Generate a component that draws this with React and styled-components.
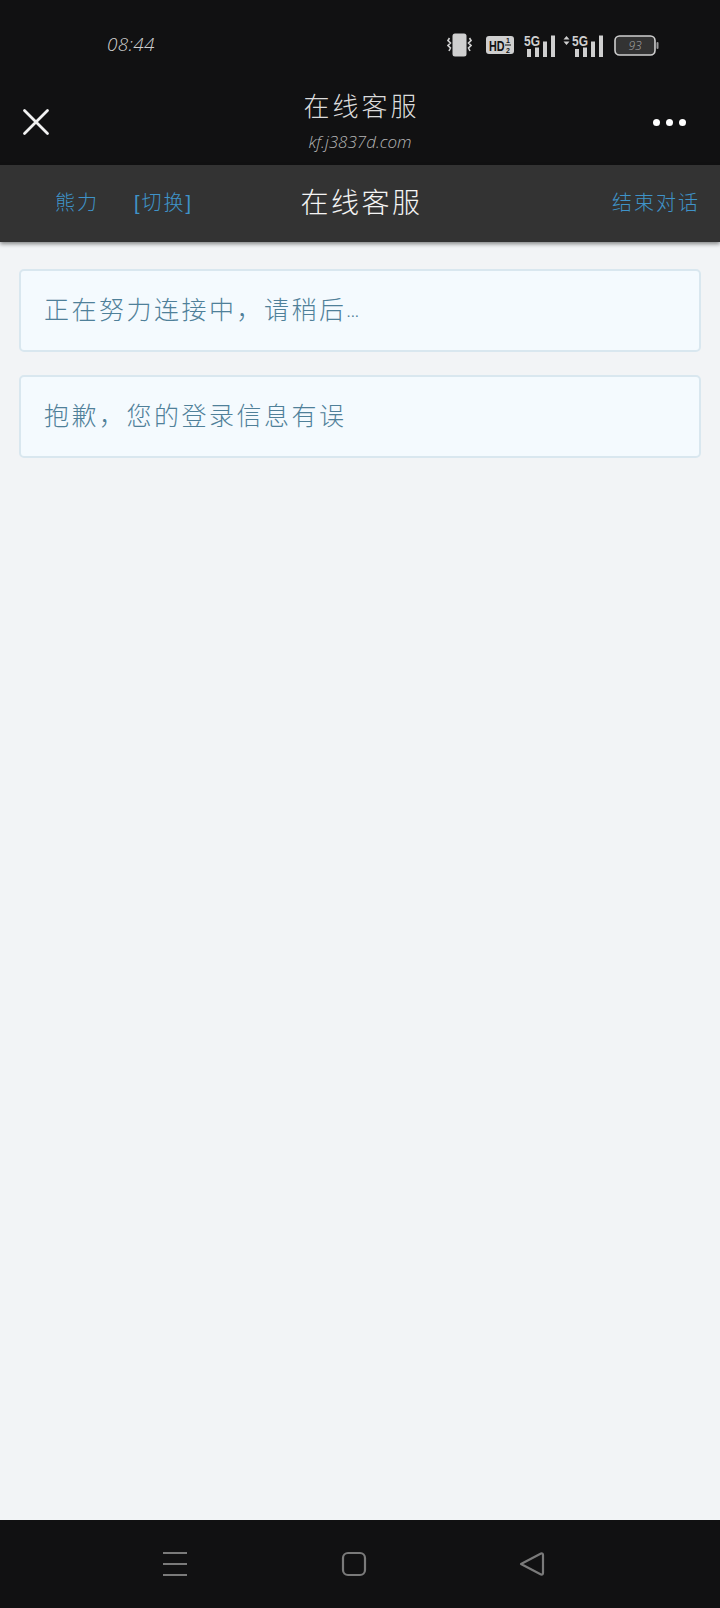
import React from 'react'
import styled, { createGlobalStyle } from 'styled-components'

const GlobalStyle = createGlobalStyle`
  html, body {
    margin: 0;
    padding: 0;
    background: #f2f4f6;
  }
  * {
    box-sizing: border-box;
  }
`

const hand = `"Liberation Sans", "Noto Sans CJK SC", sans-serif`

const Page = styled.div`
  width: 720px;
  height: 1608px;
  display: flex;
  flex-direction: column;
  font-family: ${hand};
  overflow: hidden;
`

const StatusBar = styled.div`
  height: 88px;
  background: #111112;
  display: flex;
  align-items: center;
  padding: 0 61px 0 107px;
  justify-content: space-between;
`

const Time = styled.span`
  font-family: "Open Sans", sans-serif;
  font-weight: 300;
  font-style: italic;
  font-size: 19px;
  color: #d0d0d0;
  letter-spacing: 0.3px;
`

const StatusIcons = styled.div`
  display: flex;
  align-items: center;
  gap: 10px;
  padding-top: 2px;
`

const IconGroup = styled.div`
  display: flex;
  align-items: center;
  gap: ${(p) => p.$gap}px;
`

const TitleBar = styled.div`
  height: 77px;
  background: #111112;
  display: grid;
  grid-template-columns: 1fr auto 1fr;
  align-items: start;
  padding: 0 22px;
`

const CloseBtn = styled.div`
  justify-self: start;
  margin-top: 20px;
  line-height: 0;
`

const MoreBtn = styled.div`
  justify-self: end;
  margin: 31px 12px 0 0;
  display: flex;
  gap: 6px;
`

const Dot = styled.span`
  width: 7px;
  height: 7px;
  border-radius: 50%;
  background: #fff;
`

const TitleBox = styled.div`
  display: flex;
  flex-direction: column;
  align-items: center;
`

const PageTitle = styled.div`
  font-size: 26px;
  line-height: 38px;
  font-weight: 300;
  letter-spacing: 3px;
  padding-left: 3px;
  color: #dcdcdc;
`

const PageUrl = styled.div`
  font-family: "Open Sans", sans-serif;
  font-weight: 300;
  font-style: italic;
  font-size: 17px;
  line-height: 24px;
  margin-top: 4px;
  color: #b4b4b4;
`

const SubBar = styled.div`
  height: 77px;
  background: #333333;
  display: grid;
  grid-template-columns: 1fr auto 1fr;
  align-items: center;
  padding: 0 20px 5px;
  box-shadow: 0 2px 4px rgba(0, 0, 0, 0.45);
  position: relative;
`

const UserBox = styled.div`
  display: flex;
  gap: 35px;
  margin-left: 35px;
`

const SubLink = styled.span`
  font-size: 20px;
  font-weight: 300;
  letter-spacing: ${(p) => p.$spacing || 2}px;
  color: #3f93c9;
  white-space: nowrap;
`

const EndLink = styled(SubLink)`
  justify-self: end;
`

const SubTitle = styled.div`
  font-size: 28px;
  font-weight: 300;
  letter-spacing: 2.5px;
  padding-left: 3px;
  color: #f4f4f4;
`

const Content = styled.div`
  flex: 1;
  background: #f2f4f6;
  padding: 27px 19px 0;
  display: flex;
  flex-direction: column;
  gap: 23px;
`

const Notice = styled.div`
  height: 83px;
  background: #f4fafe;
  border: 2px solid #d9e7ef;
  border-radius: 5px;
  display: flex;
  align-items: center;
  padding: 0 0 5px 23px;
  font-size: 25px;
  font-weight: 300;
  letter-spacing: 2.5px;
  color: #4f8099;
`

const Dots = styled.span`
  font-size: 15px;
  letter-spacing: 0;
  align-self: flex-end;
  margin-bottom: 25px;
`

const NavBar = styled.div`
  height: 88px;
  background: #111112;
  display: flex;
  align-items: center;
  padding: 0 0 0 162px;
  gap: 152.5px;
`

const CloseIcon = () => (
  <svg width="28" height="28" viewBox="0 0 28 28" fill="none" stroke="#f2f2f2" strokeWidth="2.8" strokeLinecap="round">
    <path d="M2.5 2.5L25.5 25.5M25.5 2.5L2.5 25.5" />
  </svg>
)

const VibrateIcon = () => (
  <svg width="25" height="24" viewBox="0 0 25 24" fill="none">
    <rect x="5.5" y="0.5" width="14" height="23" rx="2.5" fill="#cfcfcf" />
    <path d="M2.5 5L1 7.5L3.5 10L1 12.5L3.5 15L2 18M22.5 5L24 7.5L21.5 10L24 12.5L21.5 15L23 18" stroke="#cfcfcf" strokeWidth="1.6" />
  </svg>
)

const HdIcon = () => (
  <svg width="28" height="20" viewBox="0 0 28 20">
    <rect width="28" height="18" y="1" rx="3" fill="#cfcfcf" />
    <text transform="translate(3 15.5) scale(1 1.35)" fontFamily="Liberation Sans" fontWeight="700" fontSize="10.8" fill="#111">HD</text>
    <text x="20" y="8" fontFamily="Liberation Sans" fontWeight="700" fontSize="7" fill="#111">1</text>
    <rect x="19" y="9.5" width="6" height="1" fill="#111" />
    <text x="20" y="18" fontFamily="Liberation Sans" fontWeight="700" fontSize="7" fill="#111">2</text>
  </svg>
)

const SignalIcon = ({ updown }) => {
  const dx = updown ? 9 : 0
  return (
    <svg width={dx + 32} height="23" viewBox={`0 0 ${dx + 32} 23`}>
      {updown && <path d="M0.5 5.5L3.5 2L6.5 5.5ZM0.5 7.5L3.5 11L6.5 7.5Z" fill="#cfcfcf" />}
      <text x={dx} y="11.5" fontFamily="Liberation Sans" fontWeight="700" fontSize="14" fill="#cfcfcf" textLength="16" lengthAdjust="spacingAndGlyphs">5G</text>
      <rect x={dx + 3} y="15" width="4" height="8" fill="#cfcfcf" />
      <rect x={dx + 11} y="13.5" width="4" height="9.5" fill="#cfcfcf" />
      <rect x={dx + 19} y="7.5" width="4" height="15.5" fill="#cfcfcf" />
      <rect x={dx + 27} y="1.5" width="4" height="21.5" fill="#cfcfcf" />
    </svg>
  )
}

const BatteryIcon = () => (
  <svg width="45" height="21" viewBox="0 0 45 21">
    <rect x="1" y="1" width="40" height="19" rx="4.5" fill="#333" stroke="#cfcfcf" strokeWidth="1.6" />
    <rect x="42.5" y="7" width="2" height="7" rx="1" fill="#9a9a9a" />
    <text x="21" y="15" textAnchor="middle" fontFamily="Open Sans" fontStyle="italic" fontWeight="300" fontSize="12" fill="#a8a8a8">93</text>
  </svg>
)

const MenuIcon = () => (
  <svg width="26" height="26" viewBox="0 0 26 26" stroke="#7a7a7a" strokeWidth="2.2" fill="none">
    <path d="M1 2H25M1 13H25M1 24H25" />
  </svg>
)

const HomeIcon = () => (
  <svg width="26" height="26" viewBox="0 0 26 26" stroke="#7a7a7a" strokeWidth="2.2" fill="none">
    <rect x="2" y="2" width="22" height="22" rx="5" />
  </svg>
)

const BackIcon = () => (
  <svg width="26" height="26" viewBox="0 0 26 26" stroke="#7a7a7a" strokeWidth="2.2" fill="none" strokeLinejoin="round">
    <path d="M2 13L22 2.5Q24 2 24 4V22Q24 24 22 23.5Z" />
  </svg>
)

const App = () => {
  return (
    <Page>
      <GlobalStyle />
      <StatusBar>
        <Time>08:44</Time>
        <StatusIcons>
          <IconGroup $gap={14}>
            <VibrateIcon />
            <HdIcon />
          </IconGroup>
          <IconGroup $gap={7}>
            <SignalIcon />
            <SignalIcon updown />
          </IconGroup>
          <BatteryIcon />
        </StatusIcons>
      </StatusBar>
      <TitleBar>
        <CloseBtn><CloseIcon /></CloseBtn>
        <TitleBox>
          <PageTitle>在线客服</PageTitle>
          <PageUrl>kf.j3837d.com</PageUrl>
        </TitleBox>
        <MoreBtn>
          <Dot />
          <Dot />
          <Dot />
        </MoreBtn>
      </TitleBar>
      <SubBar>
        <UserBox>
          <SubLink>熊力</SubLink>
          <SubLink $spacing={0}>[切换]</SubLink>
        </UserBox>
        <SubTitle>在线客服</SubTitle>
        <EndLink>结束对话</EndLink>
      </SubBar>
      <Content>
        <Notice>正在努力连接中，请稍后<Dots>...</Dots></Notice>
        <Notice>抱歉，您的登录信息有误</Notice>
      </Content>
      <NavBar>
        <MenuIcon />
        <HomeIcon />
        <BackIcon />
      </NavBar>
    </Page>
  )
}

export default App
